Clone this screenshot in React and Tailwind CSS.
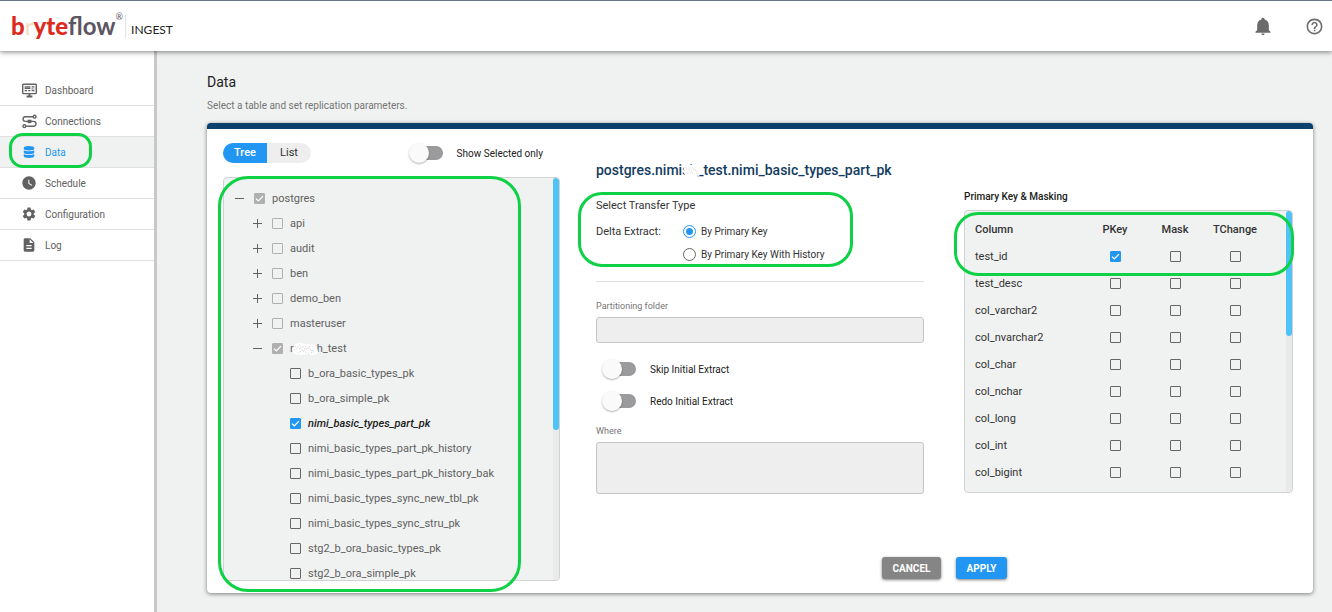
import { FaDatabase } from 'react-icons/fa';
import { MdDescription, MdHelpOutline, MdSettings, MdWatchLater } from 'react-icons/md';

function BellIcon({ className }) {
  return (
    <svg className={className} viewBox="0 0 24 24" fill="currentColor">
      <path d="M21 19v1H3v-1l2-2v-6c0-3.1 2.03-5.83 5-6.71V4a2 2 0 0 1 4 0v.29c2.97.88 5 3.61 5 6.71v6l2 2m-7 2a2 2 0 0 1-4 0" />
    </svg>
  );
}

function DashboardIcon({ className }) {
  return (
    <svg className={className} viewBox="0 0 15 14" fill="none" stroke="currentColor">
      <rect x="0.7" y="0.7" width="13.6" height="9.4" rx="0.8" strokeWidth="1.4" />
      <path d="M2.6 3.4h5.8M2.6 4.8h5.8M2.6 7.2h2.6M6.2 7.2h2.2M9.6 3.4h2.8M9.6 5.4h1.2M11.6 5.4h.8M9.6 7.2h2.8" strokeWidth="1.3" />
      <path d="M7.5 10.5v2M4.6 13h5.8" strokeWidth="1.8" />
    </svg>
  );
}

function ConnectionsIcon({ className }) {
  return (
    <svg className={className} viewBox="0 0 15 14" fill="none" stroke="currentColor" strokeWidth="1.4">
      <path d="M11 2.2H3.4a2.3 2.3 0 0 0 0 4.7h8.2a2.4 2.4 0 0 1 0 4.8H4.2" />
      <circle cx="12.6" cy="2.2" r="1.4" />
      <circle cx="2.4" cy="11.7" r="1.4" />
      <path d="M5.6 6.9h3.8" strokeWidth="3.4" />
    </svg>
  );
}

const navItems = [
  { label: 'Dashboard', icon: DashboardIcon, size: 'size-[15px]' },
  { label: 'Connections', icon: ConnectionsIcon, size: 'size-[15px]' },
  { label: 'Data', icon: FaDatabase, size: 'size-3', active: true },
  { label: 'Schedule', icon: MdWatchLater, size: 'size-4' },
  { label: 'Configuration', icon: MdSettings, size: 'size-4' },
  { label: 'Log', icon: MdDescription, size: 'size-4' },
];

const treeItems = [
  { label: 'postgres', level: 0, open: true, checked: true, disabled: true },
  { label: 'api', level: 1, open: false, disabled: true },
  { label: 'audit', level: 1, open: false, disabled: true },
  { label: 'ben', level: 1, open: false, disabled: true },
  { label: 'demo_ben', level: 1, open: false, disabled: true },
  { label: 'masteruser', level: 1, open: false, disabled: true },
  { label: 'nimish_test', level: 1, open: true, checked: true, disabled: true, masked: true },
  { label: 'b_ora_basic_types_pk', level: 2 },
  { label: 'b_ora_simple_pk', level: 2 },
  { label: 'nimi_basic_types_part_pk', level: 2, checked: true, current: true },
  { label: 'nimi_basic_types_part_pk_history', level: 2 },
  { label: 'nimi_basic_types_part_pk_history_bak', level: 2 },
  { label: 'nimi_basic_types_sync_new_tbl_pk', level: 2 },
  { label: 'nimi_basic_types_sync_stru_pk', level: 2 },
  { label: 'stg2_b_ora_basic_types_pk', level: 2 },
  { label: 'stg2_b_ora_simple_pk', level: 2 },
];

const indent = ['pl-[11px]', 'pl-[29px]', 'pl-[47px]'];

const columns = [
  'test_id',
  'test_desc',
  'col_varchar2',
  'col_nvarchar2',
  'col_char',
  'col_nchar',
  'col_long',
  'col_int',
  'col_bigint',
];

function Checkbox({ className = '', ...props }) {
  return (
    <span className={`relative inline-block size-[11px] shrink-0 ${className}`}>
      <input
        type="checkbox"
        className="peer block size-[11px] appearance-none rounded-[1px] border border-[#666] checked:border-[#2196f3] checked:bg-[#2196f3] disabled:border-[#b0b0b0] disabled:checked:bg-[#b0b0b0]"
        {...props}
      />
      <svg
        className="pointer-events-none absolute inset-0 hidden size-[11px] peer-checked:block"
        viewBox="0 0 11 11"
        fill="none"
        stroke="white"
        strokeWidth="1.3"
      >
        <path d="M2 5.6l2.3 2.3L9 3.1" />
      </svg>
    </span>
  );
}

function Switch({ id, label }) {
  return (
    <div className="flex h-5 items-center gap-[14px]">
      <input
        id={id}
        type="checkbox"
        role="switch"
        className="relative h-5 w-[34px] shrink-0 appearance-none before:absolute before:top-[3px] before:right-0 before:h-[14px] before:w-[30px] before:rounded-full before:bg-[#9b9b9d] after:absolute after:top-0 after:left-0 after:size-5 after:rounded-full after:bg-[#fafafa] after:shadow-[0_1px_2px_rgba(0,0,0,0.3)]"
      />
      <label htmlFor={id} className="text-[10px] text-[#212121]">{label}</label>
    </div>
  );
}

function Radio({ label, ...props }) {
  return (
    <label className="flex h-[23px] items-center gap-[5px] text-[10px] text-[#333]">
      <input
        type="radio"
        name="transfer"
        className="size-[13px] appearance-none rounded-full border border-[#666] checked:border-[#2196f3] checked:bg-[radial-gradient(circle,#2196f3_3px,transparent_4px)]"
        {...props}
      />
      {label}
    </label>
  );
}

function Scrollbar({ thumb }) {
  return (
    <div className="w-[6px] shrink-0 bg-[#e9eaea]">
      <div className={`rounded-[3px] bg-[#4fc3f7] ${thumb}`} />
    </div>
  );
}

// Green outline that calls attention to a group
function Highlight({ className }) {
  return <div className={`pointer-events-none absolute border-3 border-[#0fd145] ${className}`} />;
}

function Scribble({ className }) {
  return (
    <svg className={`absolute ${className}`} viewBox="0 0 28 12" preserveAspectRatio="none" fill="white" stroke="#a8a8a8" strokeWidth="0.6">
      <path stroke="none" d="M3 1l5 -1 7 1 9 0 3 4 1 4 -3 3 -8 -1 -6 1 -8 -1 -3 -4z" />
      <path fill="none" strokeDasharray="1 2" d="M3 3l6 2 5-2 6 4 5 1M2 7l5-2 5 3 6-3 6 5M6 10l5-2 7 2 5-1M8 2l6 4 6-3" />
    </svg>
  );
}

function Header() {
  return (
    <header className="relative z-10 flex h-[51px] items-center justify-between border-t border-[#6b7885] bg-white pr-2 pl-[11px] shadow-[0_1px_5px_rgba(0,0,0,0.5)]">
      <div className="flex items-center">
        <div className="flex items-start font-['Lato',sans-serif] text-2xl leading-8 font-black text-[#5b5661]">
          <span className="text-[#dd2a1f]">b</span>
          <span className="font-normal text-[#f3dcc3]">r</span>
          <span className="text-[#dd2a1f]">yte</span>
          <span className="font-bold">flow</span>
          <sup className="top-0 text-[9px] leading-[14px] font-normal">®</sup>
        </div>
        <div className="ml-[2px] h-[23px] border-l border-[#e3e3e3]" />
        <span className="mt-2 ml-[5px] font-['Lato',sans-serif] text-xs text-[#222]">INGEST</span>
      </div>
      <div className="flex items-center gap-8 text-[#6b6b6b]">
        <button type="button" aria-label="Notifications"><BellIcon className="size-5" /></button>
        <button type="button" aria-label="Help"><MdHelpOutline className="size-[19px]" /></button>
      </div>
    </header>
  );
}

function Sidebar() {
  return (
    <nav className="w-[157px] shrink-0 border-r-3 border-[#c8c8c8] bg-white pt-6">
      {navItems.map(({ label, icon: Icon, size, active }) => (
        <a
          key={label}
          href="#"
          className={`relative flex h-[31px] items-center gap-2 border-b border-[#e0e0e0] pl-[21px] text-[10px] ${active ? 'bg-[#f0f2f1] text-[#2196f3]' : 'text-[#616161]'}`}
        >
          <span className="flex w-4 justify-center">
            <Icon className={size} />
          </span>
          {label}
          {active && <Highlight className="-top-[4px] left-[9px] h-[35px] w-[83px] rounded-[14px]" />}
        </a>
      ))}
    </nav>
  );
}

function TreePanel() {
  return (
    <div className="flex-[337]">
      <div className="flex items-center justify-between pr-[17px]">
        <div className="flex h-5 overflow-hidden rounded-full text-[11px]">
          <button type="button" className="w-11 bg-[#2196f3] font-medium text-white">Tree</button>
          <button type="button" className="w-11 bg-[#eee] text-[#333]">List</button>
        </div>
        <Switch id="selected-only" label="Show Selected only" />
      </div>

      <div className="relative mt-[14px]">
        <div className="flex h-[404px] overflow-hidden rounded border border-[#d2d2d2] bg-[#f0f2f1]">
          <ul className="flex-1 overflow-hidden pt-2">
            {treeItems.map((item) => (
              <li key={item.label} className={`flex h-[25px] items-center ${indent[item.level]}`}>
                <button type="button" aria-label="Toggle" className="mr-[9px] h-[10px] w-[10px] text-[#616161]">
                  {item.level < 2 && (
                    <svg viewBox="0 0 10 10" className="size-[10px]" stroke="currentColor" strokeWidth="1">
                      <path d={item.open ? 'M0 4.5h9' : 'M0 4.5h9M4.5 0v9'} />
                    </svg>
                  )}
                </button>
                <label
                  className={`relative flex items-center gap-[7px] text-[11px] ${item.current ? 'font-medium text-[#212121] italic' : 'text-[#616161]'}`}
                >
                  <Checkbox defaultChecked={item.checked} disabled={item.disabled} />
                  <span className="pt-[2px]">{item.label}</span>
                  {item.masked && <Scribble className="left-5 h-3 w-[26px]" />}
                </label>
              </li>
            ))}
          </ul>
          <Scrollbar thumb="h-[252px]" />
        </div>
        <Highlight className="-top-px -bottom-[11px] -left-[5px] right-[39px] rounded-[30px]" />
      </div>
    </div>
  );
}

function TransferForm() {
  return (
    <div className="flex-[328] pt-[17px]">
      <h2 className="relative text-sm leading-5 font-medium text-[#143c61]">
        postgres.nimish_test.nimi_basic_types_part_pk
        <Scribble className="top-1 left-[87px] h-3 w-[18px]" />
      </h2>

      <div className="relative mt-[18px]">
        <fieldset>
          <legend className="text-[11px] leading-4 text-[#333]">Select Transfer Type</legend>
          <div className="mt-[6px] flex">
            <span className="w-[87px] text-[11px] leading-[23px] text-[#333]">Delta Extract:</span>
            <div>
              <Radio label="By Primary Key" defaultChecked />
              <Radio label="By Primary Key With History" />
            </div>
          </div>
        </fieldset>
        <Highlight className="-top-[6px] -left-[18px] h-[75px] w-[275px] rounded-[24px]" />
      </div>

      <hr className="mt-[15px] border-[#e0e0e0]" />

      <label htmlFor="folder" className="mt-[17px] block text-[9px] leading-[14px] text-[#757575]">Partitioning folder</label>
      <input id="folder" disabled className="mt-1 block h-[26px] w-full rounded-[3px] border border-[#c6c6c6] bg-[#eee] px-2 text-[11px]" />

      <div className="mt-4 flex flex-col gap-3 pl-[6px]">
        <Switch id="skip-initial" label="Skip Initial Extract" />
        <Switch id="redo-initial" label="Redo Initial Extract" />
      </div>

      <label htmlFor="where" className="mt-[13px] block text-[9px] leading-[14px] text-[#757575]">Where</label>
      <textarea id="where" disabled className="mt-1 block h-[52px] w-full resize-none rounded-[3px] border border-[#c6c6c6] bg-[#eee] px-2 text-[11px]" />
    </div>
  );
}

function ColumnTable() {
  return (
    <div className="flex-[329] pt-[46px]">
      <h3 className="text-[10px] leading-4 font-medium text-[#212121]">Primary Key &amp; Masking</h3>
      <div className="relative mt-[5px]">
        <div className="flex h-[283px] overflow-hidden rounded border border-[#d2d2d2] bg-[#f0f2f1]">
          <div className="flex-1 overflow-hidden pt-[5px] pr-[21px] pl-[10px]">
            <table className="w-full text-[11px] text-[#333]">
              <thead>
                <tr className="h-[27px]">
                  <th className="p-0 pt-[2px] text-left font-medium">Column</th>
                  <th className="w-15 p-0 pt-[2px] font-medium">PKey</th>
                  <th className="w-15 p-0 pt-[2px] font-medium">Mask</th>
                  <th className="w-15 p-0 pt-[2px] font-medium">TChange</th>
                </tr>
              </thead>
              <tbody>
                {columns.map((name, i) => (
                  <tr key={name} className="h-[27px]">
                    <td className="p-0 pt-[2px]">{name}</td>
                    {['PKey', 'Mask', 'TChange'].map((field) => (
                      <td key={field} className="p-0 text-center">
                        <Checkbox className="align-middle" aria-label={`${name} ${field}`} defaultChecked={i === 0 && field === 'PKey'} />
                      </td>
                    ))}
                  </tr>
                ))}
              </tbody>
            </table>
          </div>
          <Scrollbar thumb="h-[125px]" />
        </div>
        <Highlight className="top-[2px] -right-px -left-[10px] h-16 rounded-[24px]" />
      </div>
    </div>
  );
}

export default function App() {
  return (
    <div className="flex min-h-screen flex-col bg-[#f0f2f1] font-['Roboto',sans-serif]">
      <Header />
      <div className="flex flex-1">
        <Sidebar />
        <main className="min-w-0 flex-1 pt-[21px] pr-[19px] pb-[19px] pl-[50px]">
          <h1 className="text-sm leading-5 text-[#212121]">Data</h1>
          <p className="mt-[6px] text-[10px] leading-4 text-[#757575]">Select a table and set replication parameters.</p>

          <section className="mt-[9px] flex gap-9 rounded border-t-6 border-[#0b3f6c] bg-white pt-[14px] pr-5 pb-3 pl-4 shadow-[0_1px_4px_rgba(0,0,0,0.5)]">
            <TreePanel />
            <div className="flex flex-[697] flex-col justify-between">
              <div className="flex gap-10">
                <TransferForm />
                <ColumnTable />
              </div>
              <div className="mb-[2px] flex justify-center gap-[15px] text-[10px] font-bold text-white">
                <button type="button" className="h-[22px] w-[59px] rounded-[3px] bg-[#858585] shadow-[0_1px_3px_rgba(0,0,0,0.5)]">CANCEL</button>
                <button type="button" className="h-[22px] w-[51px] rounded-[3px] bg-[#2196f3] shadow-[0_1px_3px_rgba(0,0,0,0.5)]">APPLY</button>
              </div>
            </div>
          </section>
        </main>
      </div>
    </div>
  );
}
